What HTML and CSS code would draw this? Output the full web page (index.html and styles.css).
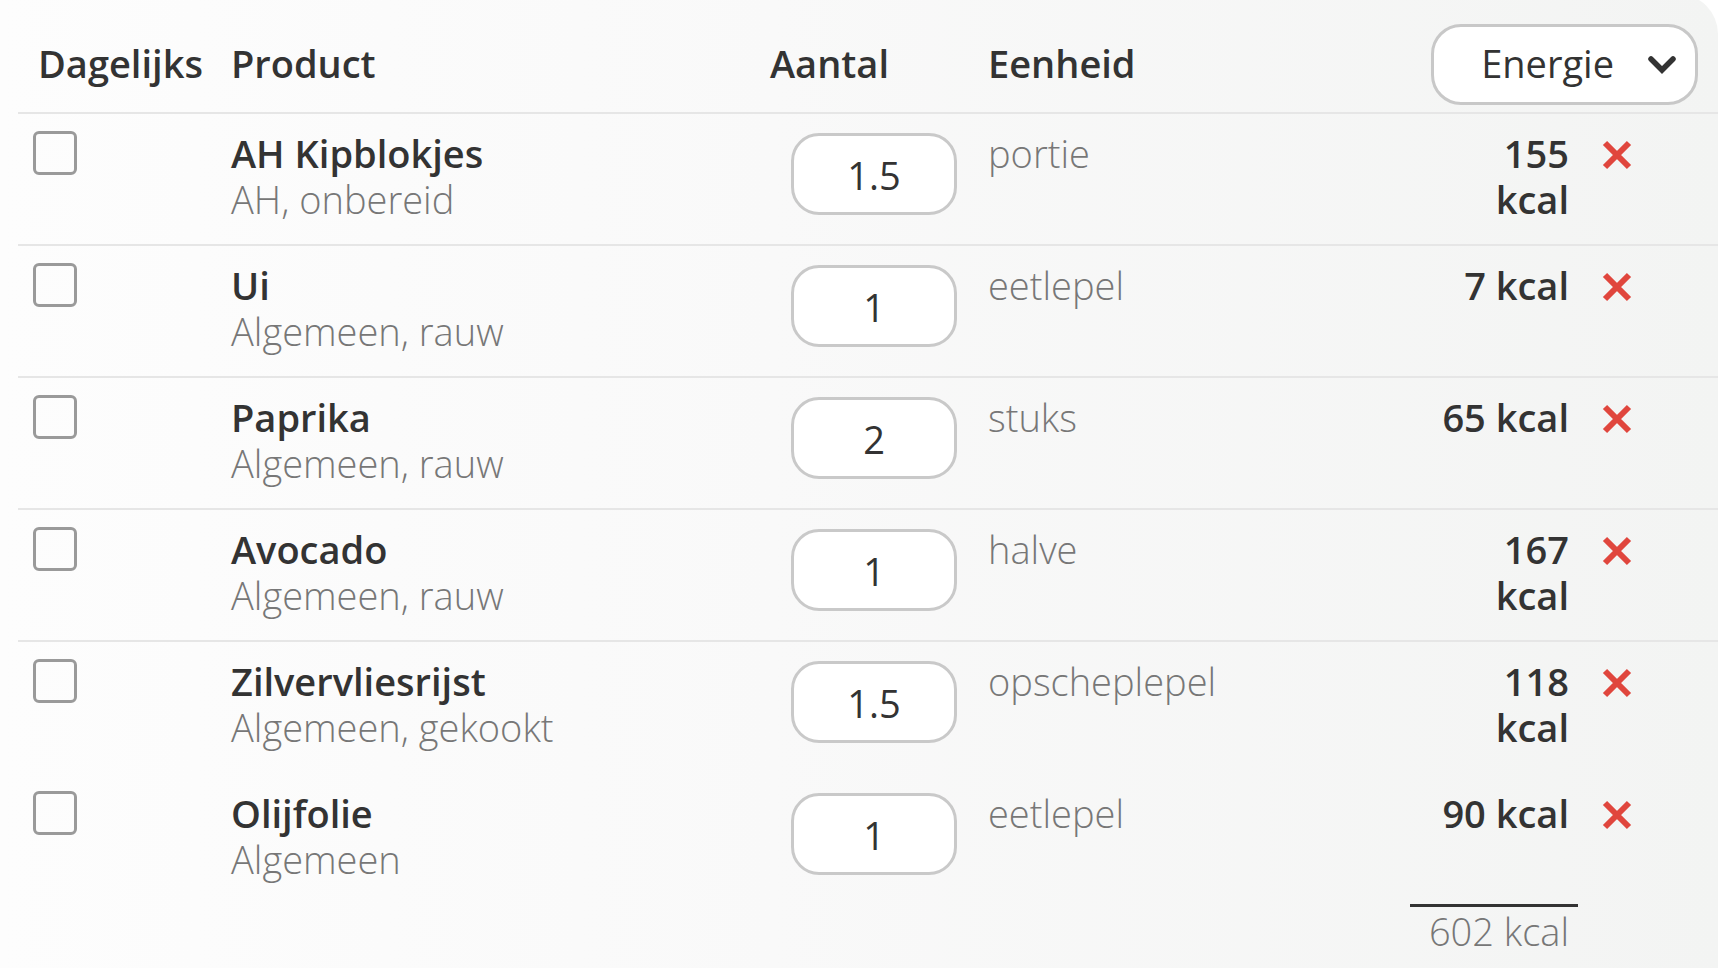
FILE: index.html
```html
<!DOCTYPE html>
<html lang="nl">
<head>
<meta charset="utf-8">
<title>Producten</title>
<link rel="stylesheet" href="styles.css">
</head>
<body>
<div class="card">
  <div class="row head">
    <div class="c-daily">Dagelijks</div>
    <div class="c-prod">Product</div>
    <div class="c-qty">Aantal</div>
    <div class="c-unit">Eenheid</div>
    <div class="c-select">
      <div class="select">
        <span>Energie</span>
        <svg class="chev" viewBox="0 0 28 18" width="28" height="18"><polyline points="3,3 14,14 25,3" fill="none" stroke="#333" stroke-width="5.5" stroke-linecap="round" stroke-linejoin="miter"/></svg>
      </div>
    </div>
  </div>

  <div class="row item">
    <div class="c-daily"><span class="box"></span></div>
    <div class="c-prod"><div class="name">AH Kipblokjes</div><div class="sub">AH, onbereid</div></div>
    <div class="c-qty"><div class="input">1.5</div></div>
    <div class="c-unit">portie</div>
    <div class="c-kcal"><div class="kcal">155 kcal</div></div>
    <div class="c-del"><svg class="x" viewBox="0 0 30 30" width="30" height="30"><path d="M3 3 L27 27 M27 3 L3 27" stroke="#e0463d" stroke-width="6" fill="none"/></svg></div>
  </div>

  <div class="row item">
    <div class="c-daily"><span class="box"></span></div>
    <div class="c-prod"><div class="name">Ui</div><div class="sub">Algemeen, rauw</div></div>
    <div class="c-qty"><div class="input">1</div></div>
    <div class="c-unit">eetlepel</div>
    <div class="c-kcal"><div class="kcal">7 kcal</div></div>
    <div class="c-del"><svg class="x" viewBox="0 0 30 30" width="30" height="30"><path d="M3 3 L27 27 M27 3 L3 27" stroke="#e0463d" stroke-width="6" fill="none"/></svg></div>
  </div>

  <div class="row item">
    <div class="c-daily"><span class="box"></span></div>
    <div class="c-prod"><div class="name">Paprika</div><div class="sub">Algemeen, rauw</div></div>
    <div class="c-qty"><div class="input">2</div></div>
    <div class="c-unit">stuks</div>
    <div class="c-kcal"><div class="kcal">65 kcal</div></div>
    <div class="c-del"><svg class="x" viewBox="0 0 30 30" width="30" height="30"><path d="M3 3 L27 27 M27 3 L3 27" stroke="#e0463d" stroke-width="6" fill="none"/></svg></div>
  </div>

  <div class="row item">
    <div class="c-daily"><span class="box"></span></div>
    <div class="c-prod"><div class="name">Avocado</div><div class="sub">Algemeen, rauw</div></div>
    <div class="c-qty"><div class="input">1</div></div>
    <div class="c-unit">halve</div>
    <div class="c-kcal"><div class="kcal">167 kcal</div></div>
    <div class="c-del"><svg class="x" viewBox="0 0 30 30" width="30" height="30"><path d="M3 3 L27 27 M27 3 L3 27" stroke="#e0463d" stroke-width="6" fill="none"/></svg></div>
  </div>

  <div class="row item">
    <div class="c-daily"><span class="box"></span></div>
    <div class="c-prod"><div class="name">Zilvervliesrijst</div><div class="sub">Algemeen, gekookt</div></div>
    <div class="c-qty"><div class="input">1.5</div></div>
    <div class="c-unit">opscheplepel</div>
    <div class="c-kcal"><div class="kcal">118 kcal</div></div>
    <div class="c-del"><svg class="x" viewBox="0 0 30 30" width="30" height="30"><path d="M3 3 L27 27 M27 3 L3 27" stroke="#e0463d" stroke-width="6" fill="none"/></svg></div>
  </div>

  <div class="row item last">
    <div class="c-daily"><span class="box"></span></div>
    <div class="c-prod"><div class="name">Olijfolie</div><div class="sub">Algemeen</div></div>
    <div class="c-qty"><div class="input">1</div></div>
    <div class="c-unit">eetlepel</div>
    <div class="c-kcal"><div class="kcal">90 kcal</div></div>
    <div class="c-del"><svg class="x" viewBox="0 0 30 30" width="30" height="30"><path d="M3 3 L27 27 M27 3 L3 27" stroke="#e0463d" stroke-width="6" fill="none"/></svg></div>
  </div>

  <div class="row total">
    <div class="c-total">602 kcal</div>
  </div>
</div>
</body>
</html>
```

FILE: styles.css
```css
html, body {
  margin: 0;
  padding: 0;
  background: #ffffff;
}

body {
  font-family: "Open Sans", "Noto Sans", "DejaVu Sans", sans-serif;
  font-size: 38px;
  line-height: 46px;
  color: #333333;
  overflow: hidden;
  height: 968px;
}

.card {
  margin-top: -6px;
  padding: 6px 0 0 18px;
  min-height: 980px;
  background: linear-gradient(to right, #fdfdfd 0%, #f9f9f9 45%, #f3f4f3 100%);
  border-top-right-radius: 40px;
}

.row {
  display: grid;
  grid-template-columns: 213px 539px 218px 1fr 168px 140px;
}

.head {
  height: 112px;
  box-sizing: border-box;
  padding: 24px 0 7px;
  align-items: center;
  font-weight: 600;
}

.head .c-daily,
.head .c-prod,
.head .c-qty,
.head .c-unit {
  margin-top: -4px;
}

.head .c-daily {
  padding-left: 20px;
}

.c-select {
  grid-column: 5 / 7;
  display: flex;
  justify-content: flex-end;
  padding-right: 20px;
}

.select {
  box-sizing: border-box;
  width: 267px;
  height: 81px;
  border: 3px solid #c8c8c8;
  border-radius: 30px;
  background: #ffffff;
  display: flex;
  align-items: center;
  justify-content: flex-end;
  gap: 34px;
  padding: 0 19px 4px 0;
  font-weight: 400;
}

.chev {
  display: block;
  margin-top: 4px;
}

.item {
  border-top: 2px solid #e6e6e6;
  padding: 19px 0;
  align-items: start;
}

.item.last {
  border-top-color: transparent;
}

.item .c-daily {
  padding-left: 15px;
}

.box {
  display: block;
  box-sizing: border-box;
  width: 44px;
  height: 44px;
  margin-top: -2px;
  border: 3px solid #9a9a9a;
  border-radius: 6px;
}

.item .c-prod,
.item .c-unit,
.item .c-kcal {
  margin-top: -3px;
  margin-bottom: 3px;
}

.name {
  font-weight: 600;
}

.sub {
  font-weight: 300;
  color: #777777;
}

.c-qty .input {
  box-sizing: border-box;
  margin-left: 21px;
  width: 166px;
  height: 82px;
  border: 3px solid #c9c9c9;
  border-radius: 28px;
  background: #ffffff;
  display: flex;
  align-items: center;
  justify-content: center;
  padding-top: 1px;
}

.item .c-unit {
  font-weight: 300;
  color: #777777;
}

.c-kcal {
  display: flex;
  justify-content: flex-end;
  padding-right: 9px;
}

.kcal {
  max-width: 136px;
  text-align: right;
  font-weight: 600;
}

.c-del {
  padding: 7px 0 0 24px;
}

.x {
  display: block;
}

.total .c-total {
  grid-column: 5;
  border-top: 3px solid #333333;
  padding: 1px 9px 0 0;
  text-align: right;
  font-weight: 300;
  color: #777777;
}
```
